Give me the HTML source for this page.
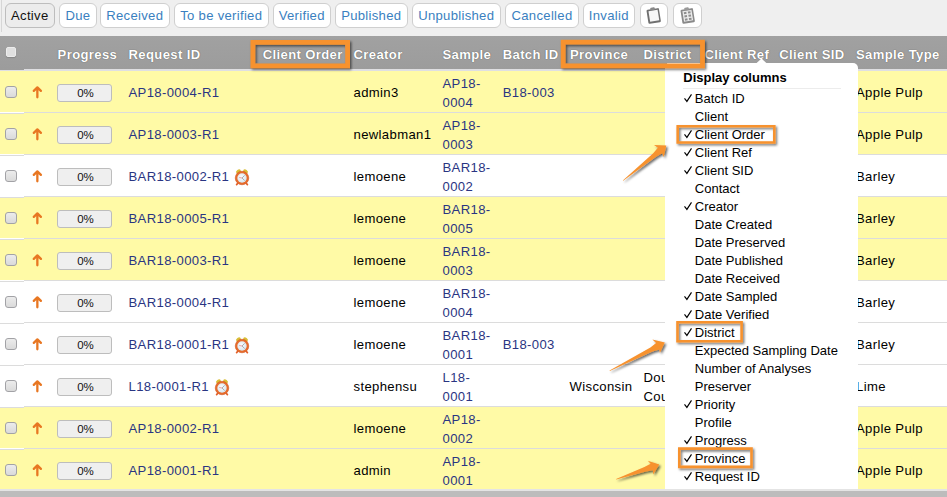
<!DOCTYPE html>
<html><head><meta charset="utf-8">
<style>
html,body{margin:0;padding:0;}
body{width:947px;height:497px;overflow:hidden;position:relative;background:#fff;font-family:"Liberation Sans",sans-serif;}
.abs{position:absolute;}
.tb{position:absolute;top:0;left:0;width:947px;height:36px;background:#efefef;}
.tb .vl{position:absolute;left:1px;top:0;width:1px;height:32px;background:#d6d6d6;}
.btn{position:absolute;top:3px;height:23px;border:1px solid #cfcfcf;border-radius:6px;background:#fff;color:#3a7fc0;font-size:13.1px;letter-spacing:0.3px;line-height:24px;text-align:center;box-sizing:content-box;}
.btn.act{background:#ececec;color:#111;border-color:#bdbdbd;}
.hdr{position:absolute;left:0;top:36px;width:947px;height:33px;background:linear-gradient(#a1a1a1,#9c9c9c);}
.hb{position:absolute;top:69px;height:2px;background:#dfdfe2;}
.ht{position:absolute;top:45px;line-height:19px;font-size:13.1px;letter-spacing:0.36px;font-weight:bold;color:#fff;white-space:nowrap;text-shadow:0 0 1px rgba(40,40,40,.8);}
.row{position:absolute;left:0;width:947px;height:42px;}
.rb{position:absolute;height:1px;background:#dcdcdc;}
.c{position:absolute;font-size:13.1px;letter-spacing:0.36px;line-height:19px;white-space:nowrap;color:#000;}
.lk{color:#2a3582;}
.cb{position:absolute;width:10px;height:10px;border:1px solid #a2a2a6;border-radius:3px;background:linear-gradient(#ececec,#dadada);}
.pg{position:absolute;left:57px;border:1px solid #bdbdbd;border-radius:3px;background:#efefef;font-size:11.5px;line-height:16px;text-align:center;color:#111;padding-left:2px;box-sizing:border-box;width:55px;height:18px;}
.pop{position:absolute;left:665px;top:63.3px;width:193px;height:425.7px;background:#fff;border-radius:5px 5px 0 0;overflow:hidden;}
.mi{position:absolute;left:0;font-size:13px;line-height:18px;color:#000;white-space:nowrap;}
.ob{position:absolute;border:4.8px solid #f7922f;box-shadow:2px 2px 3px rgba(0,0,0,.45), inset 2px 2px 3px rgba(0,0,0,.45);}
.obs{position:absolute;border:2.5px solid #f7922f;box-shadow:1px 2px 2px rgba(0,0,0,.35), inset 1px 1px 2px rgba(0,0,0,.35);}
</style></head><body>

<div class="tb"><div class="vl"></div>
<div class="btn act" style="left:4.5px;width:48.5px">Active</div>
<div class="btn" style="left:59.0px;width:36.0px">Due</div>
<div class="btn" style="left:100.0px;width:67.5px">Received</div>
<div class="btn" style="left:174.0px;width:92.5px">To be verified</div>
<div class="btn" style="left:273.0px;width:55.5px">Verified</div>
<div class="btn" style="left:335.0px;width:70.5px">Published</div>
<div class="btn" style="left:411.5px;width:87.5px">Unpublished</div>
<div class="btn" style="left:505.0px;width:72.0px">Cancelled</div>
<div class="btn" style="left:583.0px;width:49.5px">Invalid</div>
<div class="btn" style="left:639.5px;width:26px"></div>
<div class="btn" style="left:672.5px;width:27px"></div>
<svg class="abs" style="left:644.5px;top:5.5px" width="18" height="20" viewBox="0 0 18 20">
<g transform="rotate(-9 9 10)"><rect x="2.4" y="2.8" width="12.6" height="14.2" rx="1.2" fill="#707070"/><rect x="4.3" y="4.5" width="9.2" height="10.6" fill="#f7f7f7"/><rect x="6.4" y="1.4" width="4.6" height="2.6" rx="1" fill="#888"/></g></svg>
<svg class="abs" style="left:678.5px;top:5.5px" width="18" height="20" viewBox="0 0 18 20">
<g transform="rotate(-9 9 10)"><rect x="2.4" y="2.8" width="12.6" height="14.2" rx="1.2" fill="#8a8a8a"/><rect x="4.2" y="4.5" width="9.2" height="10.6" fill="#ececec"/><rect x="6.4" y="1.4" width="4.6" height="2.6" rx="1" fill="#999"/>
<rect x="5.4" y="5.6" width="2.6" height="2" fill="#8d8d8d"/><rect x="9.5" y="5.6" width="2.6" height="2" fill="#8d8d8d"/>
<rect x="5.4" y="8.9" width="2.6" height="2" fill="#8d8d8d"/><rect x="9.5" y="8.9" width="2.6" height="2" fill="#8d8d8d"/>
<rect x="5.4" y="12.2" width="2.6" height="2" fill="#8d8d8d"/><rect x="9.5" y="12.2" width="2.6" height="2" fill="#8d8d8d"/></g></svg>

</div>
<div class="hdr"></div>
<div class="abs" style="left:0;width:24px;top:69px;height:1px;background:#9c9c9c"></div><div class="hb" style="left:0;width:24px;top:70px"></div><div class="hb" style="left:24px;width:923px"></div>
<div class="abs" style="left:6px;top:47px;width:8px;height:8px;border:1px solid #ececec;border-radius:2px;background:#e0e0e0;box-shadow:0 1px 1px rgba(0,0,0,.15)"></div>
<div class="ht" style="left:57.6px">Progress</div>
<div class="ht" style="left:128.5px">Request ID</div>
<div class="ht" style="left:262.7px">Client Order</div>
<div class="ht" style="left:353.5px">Creator</div>
<div class="ht" style="left:442.5px">Sample</div>
<div class="ht" style="left:502.7px">Batch ID</div>
<div class="ht" style="left:570px">Province</div>
<div class="ht" style="left:643.5px">District</div>
<div class="ht" style="left:704.4px">Client Ref</div>
<div class="ht" style="left:779.2px">Client SID</div>
<div class="ht" style="left:856px">Sample Type</div>
<div class="abs" style="left:667px;top:63px;width:32px;height:1px;background:#f4f4f4"></div>
<div class="row" style="top:71px;height:41px;background:#fffaa6"></div>
<div class="row" style="top:113px;height:41px;background:#fffaa6"></div>
<div class="row" style="top:155px;height:41px;background:#fff"></div>
<div class="row" style="top:197px;height:41px;background:#fffaa6"></div>
<div class="row" style="top:239px;height:41px;background:#fffaa6"></div>
<div class="row" style="top:281px;height:41px;background:#fff"></div>
<div class="row" style="top:323px;height:41px;background:#fff"></div>
<div class="row" style="top:365px;height:41px;background:#fff"></div>
<div class="row" style="top:407px;height:41px;background:#fffaa6"></div>
<div class="row" style="top:449px;height:40px;background:#fffaa6"></div>
<div class="rb" style="left:0;width:24px;top:113px"></div><div class="rb" style="left:24px;width:923px;top:112px"></div>
<div class="rb" style="left:0;width:24px;top:155px"></div><div class="rb" style="left:24px;width:923px;top:154px"></div>
<div class="rb" style="left:0;width:24px;top:197px"></div><div class="rb" style="left:24px;width:923px;top:196px"></div>
<div class="rb" style="left:0;width:24px;top:239px"></div><div class="rb" style="left:24px;width:923px;top:238px"></div>
<div class="rb" style="left:0;width:24px;top:281px"></div><div class="rb" style="left:24px;width:923px;top:280px"></div>
<div class="rb" style="left:0;width:24px;top:323px"></div><div class="rb" style="left:24px;width:923px;top:322px"></div>
<div class="rb" style="left:0;width:24px;top:365px"></div><div class="rb" style="left:24px;width:923px;top:364px"></div>
<div class="rb" style="left:0;width:24px;top:407px"></div><div class="rb" style="left:24px;width:923px;top:406px"></div>
<div class="rb" style="left:0;width:24px;top:449px"></div><div class="rb" style="left:24px;width:923px;top:448px"></div>
<div class="cb" style="left:5px;top:86px"></div>
<svg class="abs" style="left:31px;top:85px" width="12" height="14" viewBox="0 0 12 14"><path d="M6.35 12.3 V2.6 M2.8 5.9 L6.35 2.4 L9.9 5.9" fill="none" stroke="#e87722" stroke-width="2.3" stroke-linecap="round" stroke-linejoin="round"/></svg>
<div class="pg" style="top:84px">0%</div>
<div class="c lk" style="left:128.5px;top:83px">AP18-0004-R1</div>
<div class="c" style="left:353.5px;top:83px">admin3</div>
<div class="c lk" style="left:442.5px;top:73.5px">AP18-<br>0004</div>
<div class="c lk" style="left:502.7px;top:83px">B18-003</div>
<div class="c" style="left:856px;top:83px">Apple Pulp</div>
<div class="cb" style="left:5px;top:128px"></div>
<svg class="abs" style="left:31px;top:127px" width="12" height="14" viewBox="0 0 12 14"><path d="M6.35 12.3 V2.6 M2.8 5.9 L6.35 2.4 L9.9 5.9" fill="none" stroke="#e87722" stroke-width="2.3" stroke-linecap="round" stroke-linejoin="round"/></svg>
<div class="pg" style="top:126px">0%</div>
<div class="c lk" style="left:128.5px;top:125px">AP18-0003-R1</div>
<div class="c" style="left:353.5px;top:125px">newlabman1</div>
<div class="c lk" style="left:442.5px;top:115.5px">AP18-<br>0003</div>
<div class="c" style="left:856px;top:125px">Apple Pulp</div>
<div class="cb" style="left:5px;top:170px"></div>
<svg class="abs" style="left:31px;top:169px" width="12" height="14" viewBox="0 0 12 14"><path d="M6.35 12.3 V2.6 M2.8 5.9 L6.35 2.4 L9.9 5.9" fill="none" stroke="#e87722" stroke-width="2.3" stroke-linecap="round" stroke-linejoin="round"/></svg>
<div class="pg" style="top:168px">0%</div>
<div class="c lk" style="left:128.5px;top:167px">BAR18-0002-R1</div>
<svg class="abs" style="left:234.4px;top:168px" width="16" height="18" viewBox="0 0 16 18">
<defs><radialGradient id="cf1" cx="45%" cy="40%" r="60%"><stop offset="0" stop-color="#fbfdfe"/><stop offset="1" stop-color="#d6e5ee"/></radialGradient></defs>
<ellipse cx="4.5" cy="3.6" rx="2.6" ry="1.9" transform="rotate(-35 4.5 3.6)" fill="#d9bd36"/>
<ellipse cx="11.5" cy="3.6" rx="2.6" ry="1.9" transform="rotate(35 11.5 3.6)" fill="#d9bd36"/>
<path d="M3.8 15.2 L2.6 16.6 M12.2 15.2 L13.4 16.6" stroke="#e2602a" stroke-width="1.7" stroke-linecap="round"/>
<circle cx="8" cy="10" r="6.75" fill="#e76c2c" stroke="#d2561e" stroke-width="0.6"/>
<circle cx="8" cy="10" r="4.7" fill="url(#cf1)"/>
<path d="M8 10 L10.6 7.4 M8 10 L10.6 12.5" stroke="#9a9a9a" stroke-width="0.8"/>
<path d="M5.2 9.5 L8 10" stroke="#e46a6a" stroke-width="0.6"/>
</svg>
<div class="c" style="left:353.5px;top:167px">lemoene</div>
<div class="c lk" style="left:442.5px;top:157.5px">BAR18-<br>0002</div>
<div class="c" style="left:856px;top:167px">Barley</div>
<div class="cb" style="left:5px;top:212px"></div>
<svg class="abs" style="left:31px;top:211px" width="12" height="14" viewBox="0 0 12 14"><path d="M6.35 12.3 V2.6 M2.8 5.9 L6.35 2.4 L9.9 5.9" fill="none" stroke="#e87722" stroke-width="2.3" stroke-linecap="round" stroke-linejoin="round"/></svg>
<div class="pg" style="top:210px">0%</div>
<div class="c lk" style="left:128.5px;top:209px">BAR18-0005-R1</div>
<div class="c" style="left:353.5px;top:209px">lemoene</div>
<div class="c lk" style="left:442.5px;top:199.5px">BAR18-<br>0005</div>
<div class="c" style="left:856px;top:209px">Barley</div>
<div class="cb" style="left:5px;top:254px"></div>
<svg class="abs" style="left:31px;top:253px" width="12" height="14" viewBox="0 0 12 14"><path d="M6.35 12.3 V2.6 M2.8 5.9 L6.35 2.4 L9.9 5.9" fill="none" stroke="#e87722" stroke-width="2.3" stroke-linecap="round" stroke-linejoin="round"/></svg>
<div class="pg" style="top:252px">0%</div>
<div class="c lk" style="left:128.5px;top:251px">BAR18-0003-R1</div>
<div class="c" style="left:353.5px;top:251px">lemoene</div>
<div class="c lk" style="left:442.5px;top:241.5px">BAR18-<br>0003</div>
<div class="c" style="left:856px;top:251px">Barley</div>
<div class="cb" style="left:5px;top:296px"></div>
<svg class="abs" style="left:31px;top:295px" width="12" height="14" viewBox="0 0 12 14"><path d="M6.35 12.3 V2.6 M2.8 5.9 L6.35 2.4 L9.9 5.9" fill="none" stroke="#e87722" stroke-width="2.3" stroke-linecap="round" stroke-linejoin="round"/></svg>
<div class="pg" style="top:294px">0%</div>
<div class="c lk" style="left:128.5px;top:293px">BAR18-0004-R1</div>
<div class="c" style="left:353.5px;top:293px">lemoene</div>
<div class="c lk" style="left:442.5px;top:283.5px">BAR18-<br>0004</div>
<div class="c" style="left:856px;top:293px">Barley</div>
<div class="cb" style="left:5px;top:338px"></div>
<svg class="abs" style="left:31px;top:337px" width="12" height="14" viewBox="0 0 12 14"><path d="M6.35 12.3 V2.6 M2.8 5.9 L6.35 2.4 L9.9 5.9" fill="none" stroke="#e87722" stroke-width="2.3" stroke-linecap="round" stroke-linejoin="round"/></svg>
<div class="pg" style="top:336px">0%</div>
<div class="c lk" style="left:128.5px;top:335px">BAR18-0001-R1</div>
<svg class="abs" style="left:234.4px;top:336px" width="16" height="18" viewBox="0 0 16 18">
<defs><radialGradient id="cf2" cx="45%" cy="40%" r="60%"><stop offset="0" stop-color="#fbfdfe"/><stop offset="1" stop-color="#d6e5ee"/></radialGradient></defs>
<ellipse cx="4.5" cy="3.6" rx="2.6" ry="1.9" transform="rotate(-35 4.5 3.6)" fill="#d9bd36"/>
<ellipse cx="11.5" cy="3.6" rx="2.6" ry="1.9" transform="rotate(35 11.5 3.6)" fill="#d9bd36"/>
<path d="M3.8 15.2 L2.6 16.6 M12.2 15.2 L13.4 16.6" stroke="#e2602a" stroke-width="1.7" stroke-linecap="round"/>
<circle cx="8" cy="10" r="6.75" fill="#e76c2c" stroke="#d2561e" stroke-width="0.6"/>
<circle cx="8" cy="10" r="4.7" fill="url(#cf2)"/>
<path d="M8 10 L10.6 7.4 M8 10 L10.6 12.5" stroke="#9a9a9a" stroke-width="0.8"/>
<path d="M5.2 9.5 L8 10" stroke="#e46a6a" stroke-width="0.6"/>
</svg>
<div class="c" style="left:353.5px;top:335px">lemoene</div>
<div class="c lk" style="left:442.5px;top:325.5px">BAR18-<br>0001</div>
<div class="c lk" style="left:502.7px;top:335px">B18-003</div>
<div class="c" style="left:856px;top:335px">Barley</div>
<div class="cb" style="left:5px;top:380px"></div>
<svg class="abs" style="left:31px;top:379px" width="12" height="14" viewBox="0 0 12 14"><path d="M6.35 12.3 V2.6 M2.8 5.9 L6.35 2.4 L9.9 5.9" fill="none" stroke="#e87722" stroke-width="2.3" stroke-linecap="round" stroke-linejoin="round"/></svg>
<div class="pg" style="top:378px">0%</div>
<div class="c lk" style="left:128.5px;top:377px">L18-0001-R1</div>
<svg class="abs" style="left:213.5px;top:378px" width="16" height="18" viewBox="0 0 16 18">
<defs><radialGradient id="cf3" cx="45%" cy="40%" r="60%"><stop offset="0" stop-color="#fbfdfe"/><stop offset="1" stop-color="#d6e5ee"/></radialGradient></defs>
<ellipse cx="4.5" cy="3.6" rx="2.6" ry="1.9" transform="rotate(-35 4.5 3.6)" fill="#d9bd36"/>
<ellipse cx="11.5" cy="3.6" rx="2.6" ry="1.9" transform="rotate(35 11.5 3.6)" fill="#d9bd36"/>
<path d="M3.8 15.2 L2.6 16.6 M12.2 15.2 L13.4 16.6" stroke="#e2602a" stroke-width="1.7" stroke-linecap="round"/>
<circle cx="8" cy="10" r="6.75" fill="#e76c2c" stroke="#d2561e" stroke-width="0.6"/>
<circle cx="8" cy="10" r="4.7" fill="url(#cf3)"/>
<path d="M8 10 L10.6 7.4 M8 10 L10.6 12.5" stroke="#9a9a9a" stroke-width="0.8"/>
<path d="M5.2 9.5 L8 10" stroke="#e46a6a" stroke-width="0.6"/>
</svg>
<div class="c" style="left:353.5px;top:377px">stephensu</div>
<div class="c lk" style="left:442.5px;top:367.5px">L18-<br>0001</div>
<div class="c" style="left:569.5px;top:377px">Wisconsin</div>
<div class="c" style="left:643.5px;top:367.5px">Douglas<br>County</div>
<div class="c" style="left:856px;top:377px">Lime</div>
<div class="cb" style="left:5px;top:422px"></div>
<svg class="abs" style="left:31px;top:421px" width="12" height="14" viewBox="0 0 12 14"><path d="M6.35 12.3 V2.6 M2.8 5.9 L6.35 2.4 L9.9 5.9" fill="none" stroke="#e87722" stroke-width="2.3" stroke-linecap="round" stroke-linejoin="round"/></svg>
<div class="pg" style="top:420px">0%</div>
<div class="c lk" style="left:128.5px;top:419px">AP18-0002-R1</div>
<div class="c" style="left:353.5px;top:419px">lemoene</div>
<div class="c lk" style="left:442.5px;top:409.5px">AP18-<br>0002</div>
<div class="c" style="left:856px;top:419px">Apple Pulp</div>
<div class="cb" style="left:5px;top:464px"></div>
<svg class="abs" style="left:31px;top:463px" width="12" height="14" viewBox="0 0 12 14"><path d="M6.35 12.3 V2.6 M2.8 5.9 L6.35 2.4 L9.9 5.9" fill="none" stroke="#e87722" stroke-width="2.3" stroke-linecap="round" stroke-linejoin="round"/></svg>
<div class="pg" style="top:462px">0%</div>
<div class="c lk" style="left:128.5px;top:461px">AP18-0001-R1</div>
<div class="c" style="left:353.5px;top:461px">admin</div>
<div class="c lk" style="left:442.5px;top:451.5px">AP18-<br>0001</div>
<div class="c" style="left:856px;top:461px">Apple Pulp</div>
<div class="abs" style="left:0;top:489px;width:947px;height:2px;background:#e4e4e4"></div>
<div class="abs" style="left:0;top:491px;width:947px;height:6px;background:#bcbcbc"></div>
<svg class="abs" style="left:754.6px;top:58px" width="14" height="7" viewBox="0 0 14 7"><path d="M0 6.5 L6.5 0.5 L13 6.5 Z" fill="#fff"/></svg>
<div class="pop">
<div class="mi" style="left:18.3px;top:6.2px;font-weight:bold">Display columns</div>
<div class="abs" style="left:18px;top:25px;width:158px;height:1px;background:#ececec"></div>
<svg class="abs" style="left:19px;top:30.299999999999997px" width="9" height="10" viewBox="0 0 9 10"><path d="M0.5 4.4 L2.9 7.4 L7.5 0.4" fill="none" stroke="#000" stroke-width="1.15"/></svg>
<div class="mi" style="left:29.8px;top:26.299999999999997px">Batch ID</div>
<div class="mi" style="left:29.8px;top:44.3px">Client</div>
<svg class="abs" style="left:19px;top:66.3px" width="9" height="10" viewBox="0 0 9 10"><path d="M0.5 4.4 L2.9 7.4 L7.5 0.4" fill="none" stroke="#000" stroke-width="1.15"/></svg>
<div class="mi" style="left:29.8px;top:62.3px">Client Order</div>
<svg class="abs" style="left:19px;top:84.30000000000001px" width="9" height="10" viewBox="0 0 9 10"><path d="M0.5 4.4 L2.9 7.4 L7.5 0.4" fill="none" stroke="#000" stroke-width="1.15"/></svg>
<div class="mi" style="left:29.8px;top:80.30000000000001px">Client Ref</div>
<svg class="abs" style="left:19px;top:102.30000000000001px" width="9" height="10" viewBox="0 0 9 10"><path d="M0.5 4.4 L2.9 7.4 L7.5 0.4" fill="none" stroke="#000" stroke-width="1.15"/></svg>
<div class="mi" style="left:29.8px;top:98.30000000000001px">Client SID</div>
<div class="mi" style="left:29.8px;top:116.30000000000001px">Contact</div>
<svg class="abs" style="left:19px;top:138.3px" width="9" height="10" viewBox="0 0 9 10"><path d="M0.5 4.4 L2.9 7.4 L7.5 0.4" fill="none" stroke="#000" stroke-width="1.15"/></svg>
<div class="mi" style="left:29.8px;top:134.3px">Creator</div>
<div class="mi" style="left:29.8px;top:152.3px">Date Created</div>
<div class="mi" style="left:29.8px;top:170.3px">Date Preserved</div>
<div class="mi" style="left:29.8px;top:188.3px">Date Published</div>
<div class="mi" style="left:29.8px;top:206.3px">Date Received</div>
<svg class="abs" style="left:19px;top:228.3px" width="9" height="10" viewBox="0 0 9 10"><path d="M0.5 4.4 L2.9 7.4 L7.5 0.4" fill="none" stroke="#000" stroke-width="1.15"/></svg>
<div class="mi" style="left:29.8px;top:224.3px">Date Sampled</div>
<svg class="abs" style="left:19px;top:246.3px" width="9" height="10" viewBox="0 0 9 10"><path d="M0.5 4.4 L2.9 7.4 L7.5 0.4" fill="none" stroke="#000" stroke-width="1.15"/></svg>
<div class="mi" style="left:29.8px;top:242.3px">Date Verified</div>
<svg class="abs" style="left:19px;top:264.3px" width="9" height="10" viewBox="0 0 9 10"><path d="M0.5 4.4 L2.9 7.4 L7.5 0.4" fill="none" stroke="#000" stroke-width="1.15"/></svg>
<div class="mi" style="left:29.8px;top:260.3px">District</div>
<div class="mi" style="left:29.8px;top:278.3px">Expected Sampling Date</div>
<div class="mi" style="left:29.8px;top:296.3px">Number of Analyses</div>
<div class="mi" style="left:29.8px;top:314.3px">Preserver</div>
<svg class="abs" style="left:19px;top:336.3px" width="9" height="10" viewBox="0 0 9 10"><path d="M0.5 4.4 L2.9 7.4 L7.5 0.4" fill="none" stroke="#000" stroke-width="1.15"/></svg>
<div class="mi" style="left:29.8px;top:332.3px">Priority</div>
<div class="mi" style="left:29.8px;top:350.3px">Profile</div>
<svg class="abs" style="left:19px;top:372.3px" width="9" height="10" viewBox="0 0 9 10"><path d="M0.5 4.4 L2.9 7.4 L7.5 0.4" fill="none" stroke="#000" stroke-width="1.15"/></svg>
<div class="mi" style="left:29.8px;top:368.3px">Progress</div>
<svg class="abs" style="left:19px;top:390.3px" width="9" height="10" viewBox="0 0 9 10"><path d="M0.5 4.4 L2.9 7.4 L7.5 0.4" fill="none" stroke="#000" stroke-width="1.15"/></svg>
<div class="mi" style="left:29.8px;top:386.3px">Province</div>
<svg class="abs" style="left:19px;top:408.3px" width="9" height="10" viewBox="0 0 9 10"><path d="M0.5 4.4 L2.9 7.4 L7.5 0.4" fill="none" stroke="#000" stroke-width="1.15"/></svg>
<div class="mi" style="left:29.8px;top:404.3px">Request ID</div>
</div>
<svg class="abs" style="left:0;top:0" width="947" height="497"><defs><filter id="fsh" x="-10%" y="-30%" width="120%" height="160%"><feDropShadow dx="1.4" dy="1.6" stdDeviation="1.1" flood-color="#000" flood-opacity="0.55"/></filter></defs>
<path fill-rule="evenodd" d="M250.5 39.9H350.0V68.3H250.5Z M255.3 44.699999999999996V63.5H345.2V44.699999999999996Z" fill="#f7922f" filter="url(#fsh)"/>
<path fill-rule="evenodd" d="M560.8 39.8H704.9V68.3H560.8Z M565.5999999999999 44.599999999999994V63.5H700.1V44.599999999999994Z" fill="#f7922f" filter="url(#fsh)"/>
<path fill-rule="evenodd" d="M676.4 124.9H775.6V143.8H676.4Z M679.0 127.5V141.20000000000002H773.0V127.5Z" fill="#f7922f" filter="url(#fsh)"/>
<path fill-rule="evenodd" d="M676.2 320.9H742.9V342.6H676.2Z M678.8000000000001 323.5V340.0H740.3V323.5Z" fill="#f7922f" filter="url(#fsh)"/>
<path fill-rule="evenodd" d="M678.0 447.3H752.8V468.2H678.0Z M680.6 449.90000000000003V465.59999999999997H750.1999999999999V449.90000000000003Z" fill="#f7922f" filter="url(#fsh)"/>
</svg>
<svg class="abs" style="left:0;top:0" width="947" height="497"><defs><filter id="sh" x="-20%" y="-20%" width="140%" height="140%"><feDropShadow dx="1.6" dy="1.6" stdDeviation="1.1" flood-color="#000" flood-opacity="0.6"/></filter></defs>
<polygon points="622.8,180.4 653.2,153.2 657.9,147.8 654.0,145.1 666.3,145.5 663.7,157.3 662.3,153.3 656.1,156.7 623.2,180.8" fill="#f7922f" filter="url(#sh)"/>
<polygon points="609.6,370.6 650.4,347.4 656.1,343.1 652.4,339.5 664.8,342.6 659.9,353.1 659.3,349.4 652.5,351.5 609.8,371.0" fill="#f7922f" filter="url(#sh)"/>
<polygon points="616.1,479.0 644.4,467.1 650.6,463.7 647.8,460.7 659.3,464.4 653.2,474.5 652.9,470.3 645.9,471.4 616.3,479.4" fill="#f7922f" filter="url(#sh)"/>
</svg>
</body></html>
